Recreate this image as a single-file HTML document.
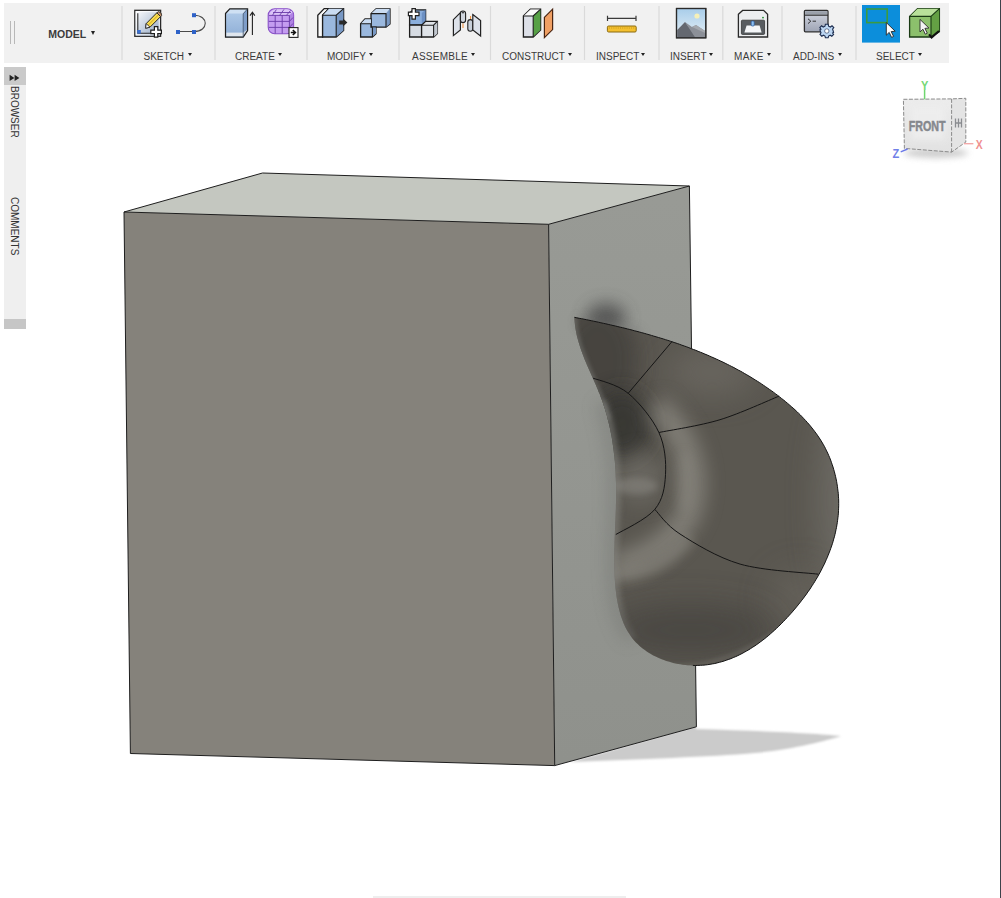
<!DOCTYPE html>
<html><head><meta charset="utf-8">
<style>
html,body{margin:0;padding:0;width:1001px;height:898px;overflow:hidden;background:#fff;font-family:"Liberation Sans",sans-serif;}
svg{position:absolute;left:0;top:0;}
#rline{position:absolute;left:1000px;top:0;width:1px;height:898px;background:#3c424a;}
#tb{position:absolute;left:4px;top:3px;width:945px;height:60px;background:#f1f1f1;}
#tb svg{position:absolute;}
.sep{position:absolute;top:3px;width:1px;height:55px;background:#dcdcdc;}
.lbl{position:absolute;top:48px;font-size:10px;color:#3a3a3a;white-space:nowrap;line-height:12px;}
.arr{display:inline-block;width:0;height:0;border-left:2.9px solid transparent;border-right:2.9px solid transparent;border-top:3.6px solid #222;vertical-align:4.3px;margin-left:3.5px;}
#panel{position:absolute;left:4px;top:67px;width:22px;height:252px;background:#efefef;}
#phead{position:absolute;left:0;top:0;width:22px;height:18px;background:#cacaca;}
#pfoot{position:absolute;left:4px;top:319px;width:22px;height:10px;background:#c6c6c6;}
.vt{position:absolute;font-size:10px;color:#333;transform:rotate(90deg);transform-origin:0 0;white-space:nowrap;line-height:10px;}
#bbar{position:absolute;left:373px;top:896px;width:253px;height:2px;background:#eeeeee;}
</style></head><body>

<svg width="1001" height="898" viewBox="0 0 1001 898">
<defs>
  <filter id="b1" filterUnits="userSpaceOnUse" x="0" y="0" width="1001" height="898"><feGaussianBlur stdDeviation="0.8"/></filter>
  <filter id="b2" filterUnits="userSpaceOnUse" x="0" y="0" width="1001" height="898"><feGaussianBlur stdDeviation="2"/></filter>
  <filter id="b3" filterUnits="userSpaceOnUse" x="0" y="0" width="1001" height="898"><feGaussianBlur stdDeviation="3"/></filter>
  <filter id="b6" filterUnits="userSpaceOnUse" x="0" y="0" width="1001" height="898"><feGaussianBlur stdDeviation="6"/></filter>
  <filter id="b8" filterUnits="userSpaceOnUse" x="0" y="0" width="1001" height="898"><feGaussianBlur stdDeviation="8"/></filter>
  <filter id="b10" filterUnits="userSpaceOnUse" x="0" y="0" width="1001" height="898"><feGaussianBlur stdDeviation="10"/></filter>
  <filter id="b16" filterUnits="userSpaceOnUse" x="0" y="0" width="1001" height="898"><feGaussianBlur stdDeviation="16"/></filter>
  <clipPath id="rface"><polygon points="548.6,224.3 689.4,186 696.4,726.8 554.7,765.6"/></clipPath>
  <clipPath id="bclip"><path d="M574.4,317.3 L576.8,317.8 L579.2,318.3 L581.6,318.7 L584.0,319.2 L586.5,319.7 L588.9,320.2 L591.3,320.7 L593.7,321.2 L596.1,321.7 L598.5,322.2 L600.9,322.8 L603.4,323.3 L605.8,323.8 L608.2,324.4 L610.6,324.9 L613.0,325.5 L615.4,326.0 L617.8,326.6 L620.2,327.2 L622.6,327.7 L625.0,328.3 L627.4,328.9 L629.8,329.5 L632.2,330.1 L634.6,330.8 L637.0,331.4 L639.4,332.0 L641.8,332.7 L644.2,333.3 L646.6,334.0 L649.0,334.7 L651.4,335.4 L653.7,336.1 L656.1,336.8 L658.5,337.5 L660.8,338.2 L663.2,338.9 L665.6,339.7 L667.9,340.4 L670.3,341.2 L672.6,342.0 L674.9,342.7 L677.3,343.5 L679.6,344.3 L681.9,345.2 L684.3,346.0 L686.6,346.8 L688.9,347.7 L691.2,348.6 L693.5,349.5 L695.8,350.3 L698.1,351.3 L700.4,352.2 L702.7,353.1 L704.9,354.1 L707.2,355.0 L709.5,356.0 L711.7,357.0 L714.0,358.0 L716.2,359.0 L718.4,360.0 L720.7,361.1 L722.9,362.1 L725.1,363.2 L727.3,364.3 L729.5,365.4 L731.7,366.5 L733.9,367.6 L736.0,368.8 L738.2,370.0 L740.4,371.1 L742.5,372.3 L744.7,373.6 L746.8,374.8 L748.9,376.0 L751.0,377.3 L753.1,378.6 L755.2,379.9 L757.3,381.2 L759.4,382.5 L761.5,383.9 L763.5,385.3 L765.6,386.7 L767.6,388.1 L769.6,389.5 L771.7,390.9 L773.7,392.4 L775.7,393.9 L777.7,395.4 L779.6,396.9 L781.6,398.5 L783.6,400.0 L785.5,401.6 L787.4,403.2 L789.3,404.8 L791.2,406.5 L793.1,408.1 L795.0,409.8 L796.8,411.5 L798.6,413.3 L800.4,415.0 L802.1,416.8 L803.8,418.6 L805.5,420.4 L807.2,422.3 L808.8,424.1 L810.4,426.0 L812.0,428.0 L813.5,429.9 L815.0,431.9 L816.5,433.9 L817.9,435.9 L819.3,438.0 L820.6,440.0 L821.9,442.1 L823.2,444.3 L824.4,446.4 L825.5,448.6 L826.6,450.9 L827.7,453.1 L828.7,455.4 L829.7,457.7 L830.6,460.0 L831.4,462.3 L832.2,464.6 L833.0,467.0 L833.7,469.4 L834.4,471.8 L835.0,474.2 L835.6,476.6 L836.1,479.0 L836.6,481.4 L837.0,483.9 L837.4,486.3 L837.7,488.8 L838.0,491.2 L838.3,493.6 L838.4,496.1 L838.6,498.5 L838.7,501.0 L838.7,503.4 L838.7,505.8 L838.6,508.2 L838.5,510.7 L838.4,513.1 L838.2,515.5 L837.9,517.9 L837.6,520.3 L837.3,522.6 L836.9,525.0 L836.5,527.4 L836.0,529.7 L835.5,532.1 L835.0,534.4 L834.4,536.8 L833.7,539.1 L833.1,541.4 L832.4,543.7 L831.6,546.0 L830.8,548.3 L830.0,550.6 L829.1,552.9 L828.2,555.1 L827.3,557.4 L826.3,559.6 L825.3,561.9 L824.3,564.1 L823.2,566.3 L822.1,568.5 L821.0,570.7 L819.8,572.9 L818.6,575.0 L817.4,577.2 L816.1,579.3 L814.8,581.5 L813.5,583.6 L812.1,585.7 L810.8,587.8 L809.4,589.9 L807.9,591.9 L806.5,594.0 L805.0,596.0 L803.5,598.1 L801.9,600.1 L800.4,602.1 L798.8,604.1 L797.2,606.1 L795.6,608.0 L793.9,610.0 L792.3,611.9 L790.6,613.8 L788.9,615.7 L787.1,617.6 L785.4,619.5 L783.6,621.3 L781.8,623.2 L780.0,625.0 L778.2,626.7 L776.4,628.5 L774.5,630.2 L772.6,631.9 L770.7,633.6 L768.8,635.3 L766.8,636.9 L764.9,638.5 L762.9,640.0 L760.9,641.5 L758.9,643.0 L756.8,644.5 L754.8,645.9 L752.7,647.2 L750.6,648.6 L748.5,649.9 L746.4,651.1 L744.2,652.3 L742.1,653.5 L739.9,654.6 L737.7,655.7 L735.5,656.7 L733.2,657.6 L731.0,658.6 L728.7,659.4 L726.4,660.2 L724.1,661.0 L721.8,661.7 L719.5,662.3 L717.1,662.9 L714.8,663.5 L712.4,663.9 L710.0,664.3 L707.6,664.7 L705.2,665.0 L702.7,665.2 L700.3,665.3 L697.8,665.4 L695.3,665.5 L692.9,665.4 L690.4,665.3 L687.9,665.2 L685.5,665.0 L683.0,664.7 L680.6,664.3 L678.2,663.9 L675.7,663.4 L673.3,662.9 L671.0,662.3 L668.6,661.6 L666.3,660.9 L664.0,660.1 L661.7,659.2 L659.4,658.3 L657.2,657.3 L655.1,656.3 L652.9,655.2 L650.9,654.0 L648.8,652.8 L646.8,651.5 L644.9,650.1 L643.0,648.7 L641.1,647.2 L639.4,645.7 L637.7,644.1 L636.0,642.4 L634.4,640.7 L632.9,638.9 L631.4,637.0 L630.1,635.1 L628.8,633.1 L627.5,631.1 L626.4,629.0 L625.3,626.9 L624.3,624.7 L623.3,622.4 L622.4,620.1 L621.6,617.8 L620.8,615.4 L620.1,613.0 L619.4,610.6 L618.8,608.1 L618.2,605.7 L617.7,603.1 L617.2,600.6 L616.8,598.1 L616.4,595.5 L616.1,592.9 L615.8,590.4 L615.5,587.8 L615.3,585.2 L615.0,582.6 L614.9,580.0 L614.7,577.5 L614.6,574.9 L614.5,572.4 L614.4,569.8 L614.3,567.3 L614.3,564.8 L614.2,562.2 L614.2,559.7 L614.2,557.2 L614.2,554.7 L614.3,552.2 L614.3,549.7 L614.4,547.3 L614.5,544.8 L614.5,542.3 L614.6,539.8 L614.7,537.4 L614.8,534.9 L614.9,532.4 L615.0,530.0 L615.1,527.5 L615.2,525.1 L615.3,522.6 L615.4,520.2 L615.5,517.7 L615.6,515.3 L615.7,512.8 L615.8,510.4 L615.9,507.9 L615.9,505.5 L616.0,503.0 L616.0,500.5 L616.1,498.1 L616.1,495.6 L616.1,493.2 L616.1,490.7 L616.1,488.2 L616.0,485.8 L616.0,483.3 L615.9,480.8 L615.8,478.4 L615.7,475.9 L615.6,473.4 L615.5,471.0 L615.3,468.5 L615.2,466.0 L615.0,463.6 L614.8,461.1 L614.5,458.7 L614.3,456.2 L614.0,453.7 L613.7,451.3 L613.4,448.9 L613.1,446.4 L612.7,444.0 L612.4,441.5 L612.0,439.1 L611.6,436.7 L611.1,434.3 L610.6,431.8 L610.2,429.4 L609.6,427.0 L609.1,424.6 L608.5,422.2 L607.9,419.9 L607.3,417.5 L606.7,415.1 L606.0,412.7 L605.3,410.4 L604.6,408.0 L603.8,405.7 L603.1,403.4 L602.3,401.1 L601.4,398.7 L600.5,396.4 L599.7,394.1 L598.7,391.9 L597.8,389.6 L596.8,387.3 L595.9,385.0 L594.9,382.8 L593.9,380.5 L592.9,378.3 L591.9,376.0 L590.9,373.7 L589.9,371.5 L588.9,369.2 L587.9,367.0 L586.9,364.7 L586.0,362.4 L585.0,360.2 L584.1,357.9 L583.2,355.6 L582.3,353.3 L581.5,351.0 L580.7,348.7 L579.9,346.3 L579.2,344.0 L578.5,341.7 L577.8,339.3 L577.2,336.9 L576.6,334.5 L576.1,332.1 L575.7,329.7 L575.3,327.3 L575.0,324.8 L574.7,322.3 L574.5,319.8 L574.4,317.3 Z"/></clipPath>
</defs>
<path d="M570,762 C640,759 710,757 755,753 C795,749 825,741 841,736 C815,733 760,731 696,729 L696,726 Z" fill="#cbcbcb" filter="url(#b1)"/>
<polygon points="124,212 262.5,173 689.4,186 548.6,224.3" fill="#c4c7c0"/>
<polygon points="124,212 548.6,224.3 554.7,765.6 130.4,753.5" fill="#85827b"/>
<linearGradient id="rfg" gradientUnits="userSpaceOnUse" x1="0" y1="200" x2="0" y2="760"><stop offset="0" stop-color="#989a95"/><stop offset="1" stop-color="#8f918c"/></linearGradient>
<polygon points="548.6,224.3 689.4,186 696.4,726.8 554.7,765.6" fill="url(#rfg)"/>
<g stroke="#1e1e1e" stroke-width="1" fill="none">
  <polyline points="130.4,753.5 124,212 262.5,173 689.4,186 696.4,726.8 554.7,765.6 130.4,753.5"/>
  <polyline points="124,212 548.6,224.3 689.4,186"/>
  <line x1="548.6" y1="224.3" x2="554.7" y2="765.6"/>
</g>
<g clip-path="url(#rface)">
  <ellipse cx="606" cy="318" rx="20" ry="15" fill="#4a4a49" opacity="0.8" filter="url(#b8)"/>
  <path d="M578,322 L640,335" stroke="#60605e" stroke-width="8" opacity="0.45" filter="url(#b6)"/>
  <path d="M632.9,638.9 L631.4,637.0 L630.1,635.1 L628.8,633.1 L627.5,631.1 L626.4,629.0 L625.3,626.9 L624.3,624.7 L623.3,622.4 L622.4,620.1 L621.6,617.8 L620.8,615.4 L620.1,613.0 L619.4,610.6 L618.8,608.1 L618.2,605.7 L617.7,603.1 L617.2,600.6 L616.8,598.1 L616.4,595.5 L616.1,592.9 L615.8,590.4 L615.5,587.8 L615.3,585.2 L615.0,582.6 L614.9,580.0 L614.7,577.5 L614.6,574.9 L614.5,572.4 L614.4,569.8 L614.3,567.3 L614.3,564.8 L614.2,562.2 L614.2,559.7 L614.2,557.2 L614.2,554.7 L614.3,552.2 L614.3,549.7 L614.4,547.3 L614.5,544.8 L614.5,542.3 L614.6,539.8 L614.7,537.4 L614.8,534.9 L614.9,532.4 L615.0,530.0 L615.1,527.5 L615.2,525.1 L615.3,522.6 L615.4,520.2 L615.5,517.7 L615.6,515.3 L615.7,512.8 L615.8,510.4 L615.9,507.9 L615.9,505.5 L616.0,503.0 L616.0,500.5 L616.1,498.1 L616.1,495.6 L616.1,493.2 L616.1,490.7 L616.1,488.2 L616.0,485.8 L616.0,483.3 L615.9,480.8 L615.8,478.4 L615.7,475.9 L615.6,473.4 L615.5,471.0 L615.3,468.5 L615.2,466.0 L615.0,463.6 L614.8,461.1 L614.5,458.7 L614.3,456.2 L614.0,453.7 L613.7,451.3 L613.4,448.9 L613.1,446.4 L612.7,444.0 L612.4,441.5 L612.0,439.1 L611.6,436.7 L611.1,434.3 L610.6,431.8 L610.2,429.4 L609.6,427.0 L609.1,424.6 L608.5,422.2 L607.9,419.9 L607.3,417.5 L606.7,415.1 L606.0,412.7 L605.3,410.4 L604.6,408.0 L603.8,405.7 L603.1,403.4 L602.3,401.1" stroke="#6e706c" stroke-width="16" fill="none" opacity="0.4" filter="url(#b8)"/>
</g>
<path d="M574.4,317.3 L576.8,317.8 L579.2,318.3 L581.6,318.7 L584.0,319.2 L586.5,319.7 L588.9,320.2 L591.3,320.7 L593.7,321.2 L596.1,321.7 L598.5,322.2 L600.9,322.8 L603.4,323.3 L605.8,323.8 L608.2,324.4 L610.6,324.9 L613.0,325.5 L615.4,326.0 L617.8,326.6 L620.2,327.2 L622.6,327.7 L625.0,328.3 L627.4,328.9 L629.8,329.5 L632.2,330.1 L634.6,330.8 L637.0,331.4 L639.4,332.0 L641.8,332.7 L644.2,333.3 L646.6,334.0 L649.0,334.7 L651.4,335.4 L653.7,336.1 L656.1,336.8 L658.5,337.5 L660.8,338.2 L663.2,338.9 L665.6,339.7 L667.9,340.4 L670.3,341.2 L672.6,342.0 L674.9,342.7 L677.3,343.5 L679.6,344.3 L681.9,345.2 L684.3,346.0 L686.6,346.8 L688.9,347.7 L691.2,348.6 L693.5,349.5 L695.8,350.3 L698.1,351.3 L700.4,352.2 L702.7,353.1 L704.9,354.1 L707.2,355.0 L709.5,356.0 L711.7,357.0 L714.0,358.0 L716.2,359.0 L718.4,360.0 L720.7,361.1 L722.9,362.1 L725.1,363.2 L727.3,364.3 L729.5,365.4 L731.7,366.5 L733.9,367.6 L736.0,368.8 L738.2,370.0 L740.4,371.1 L742.5,372.3 L744.7,373.6 L746.8,374.8 L748.9,376.0 L751.0,377.3 L753.1,378.6 L755.2,379.9 L757.3,381.2 L759.4,382.5 L761.5,383.9 L763.5,385.3 L765.6,386.7 L767.6,388.1 L769.6,389.5 L771.7,390.9 L773.7,392.4 L775.7,393.9 L777.7,395.4 L779.6,396.9 L781.6,398.5 L783.6,400.0 L785.5,401.6 L787.4,403.2 L789.3,404.8 L791.2,406.5 L793.1,408.1 L795.0,409.8 L796.8,411.5 L798.6,413.3 L800.4,415.0 L802.1,416.8 L803.8,418.6 L805.5,420.4 L807.2,422.3 L808.8,424.1 L810.4,426.0 L812.0,428.0 L813.5,429.9 L815.0,431.9 L816.5,433.9 L817.9,435.9 L819.3,438.0 L820.6,440.0 L821.9,442.1 L823.2,444.3 L824.4,446.4 L825.5,448.6 L826.6,450.9 L827.7,453.1 L828.7,455.4 L829.7,457.7 L830.6,460.0 L831.4,462.3 L832.2,464.6 L833.0,467.0 L833.7,469.4 L834.4,471.8 L835.0,474.2 L835.6,476.6 L836.1,479.0 L836.6,481.4 L837.0,483.9 L837.4,486.3 L837.7,488.8 L838.0,491.2 L838.3,493.6 L838.4,496.1 L838.6,498.5 L838.7,501.0 L838.7,503.4 L838.7,505.8 L838.6,508.2 L838.5,510.7 L838.4,513.1 L838.2,515.5 L837.9,517.9 L837.6,520.3 L837.3,522.6 L836.9,525.0 L836.5,527.4 L836.0,529.7 L835.5,532.1 L835.0,534.4 L834.4,536.8 L833.7,539.1 L833.1,541.4 L832.4,543.7 L831.6,546.0 L830.8,548.3 L830.0,550.6 L829.1,552.9 L828.2,555.1 L827.3,557.4 L826.3,559.6 L825.3,561.9 L824.3,564.1 L823.2,566.3 L822.1,568.5 L821.0,570.7 L819.8,572.9 L818.6,575.0 L817.4,577.2 L816.1,579.3 L814.8,581.5 L813.5,583.6 L812.1,585.7 L810.8,587.8 L809.4,589.9 L807.9,591.9 L806.5,594.0 L805.0,596.0 L803.5,598.1 L801.9,600.1 L800.4,602.1 L798.8,604.1 L797.2,606.1 L795.6,608.0 L793.9,610.0 L792.3,611.9 L790.6,613.8 L788.9,615.7 L787.1,617.6 L785.4,619.5 L783.6,621.3 L781.8,623.2 L780.0,625.0 L778.2,626.7 L776.4,628.5 L774.5,630.2 L772.6,631.9 L770.7,633.6 L768.8,635.3 L766.8,636.9 L764.9,638.5 L762.9,640.0 L760.9,641.5 L758.9,643.0 L756.8,644.5 L754.8,645.9 L752.7,647.2 L750.6,648.6 L748.5,649.9 L746.4,651.1 L744.2,652.3 L742.1,653.5 L739.9,654.6 L737.7,655.7 L735.5,656.7 L733.2,657.6 L731.0,658.6 L728.7,659.4 L726.4,660.2 L724.1,661.0 L721.8,661.7 L719.5,662.3 L717.1,662.9 L714.8,663.5 L712.4,663.9 L710.0,664.3 L707.6,664.7 L705.2,665.0 L702.7,665.2 L700.3,665.3 L697.8,665.4 L695.3,665.5 L692.9,665.4 L690.4,665.3 L687.9,665.2 L685.5,665.0 L683.0,664.7 L680.6,664.3 L678.2,663.9 L675.7,663.4 L673.3,662.9 L671.0,662.3 L668.6,661.6 L666.3,660.9 L664.0,660.1 L661.7,659.2 L659.4,658.3 L657.2,657.3 L655.1,656.3 L652.9,655.2 L650.9,654.0 L648.8,652.8 L646.8,651.5 L644.9,650.1 L643.0,648.7 L641.1,647.2 L639.4,645.7 L637.7,644.1 L636.0,642.4 L634.4,640.7 L632.9,638.9 L631.4,637.0 L630.1,635.1 L628.8,633.1 L627.5,631.1 L626.4,629.0 L625.3,626.9 L624.3,624.7 L623.3,622.4 L622.4,620.1 L621.6,617.8 L620.8,615.4 L620.1,613.0 L619.4,610.6 L618.8,608.1 L618.2,605.7 L617.7,603.1 L617.2,600.6 L616.8,598.1 L616.4,595.5 L616.1,592.9 L615.8,590.4 L615.5,587.8 L615.3,585.2 L615.0,582.6 L614.9,580.0 L614.7,577.5 L614.6,574.9 L614.5,572.4 L614.4,569.8 L614.3,567.3 L614.3,564.8 L614.2,562.2 L614.2,559.7 L614.2,557.2 L614.2,554.7 L614.3,552.2 L614.3,549.7 L614.4,547.3 L614.5,544.8 L614.5,542.3 L614.6,539.8 L614.7,537.4 L614.8,534.9 L614.9,532.4 L615.0,530.0 L615.1,527.5 L615.2,525.1 L615.3,522.6 L615.4,520.2 L615.5,517.7 L615.6,515.3 L615.7,512.8 L615.8,510.4 L615.9,507.9 L615.9,505.5 L616.0,503.0 L616.0,500.5 L616.1,498.1 L616.1,495.6 L616.1,493.2 L616.1,490.7 L616.1,488.2 L616.0,485.8 L616.0,483.3 L615.9,480.8 L615.8,478.4 L615.7,475.9 L615.6,473.4 L615.5,471.0 L615.3,468.5 L615.2,466.0 L615.0,463.6 L614.8,461.1 L614.5,458.7 L614.3,456.2 L614.0,453.7 L613.7,451.3 L613.4,448.9 L613.1,446.4 L612.7,444.0 L612.4,441.5 L612.0,439.1 L611.6,436.7 L611.1,434.3 L610.6,431.8 L610.2,429.4 L609.6,427.0 L609.1,424.6 L608.5,422.2 L607.9,419.9 L607.3,417.5 L606.7,415.1 L606.0,412.7 L605.3,410.4 L604.6,408.0 L603.8,405.7 L603.1,403.4 L602.3,401.1 L601.4,398.7 L600.5,396.4 L599.7,394.1 L598.7,391.9 L597.8,389.6 L596.8,387.3 L595.9,385.0 L594.9,382.8 L593.9,380.5 L592.9,378.3 L591.9,376.0 L590.9,373.7 L589.9,371.5 L588.9,369.2 L587.9,367.0 L586.9,364.7 L586.0,362.4 L585.0,360.2 L584.1,357.9 L583.2,355.6 L582.3,353.3 L581.5,351.0 L580.7,348.7 L579.9,346.3 L579.2,344.0 L578.5,341.7 L577.8,339.3 L577.2,336.9 L576.6,334.5 L576.1,332.1 L575.7,329.7 L575.3,327.3 L575.0,324.8 L574.7,322.3 L574.5,319.8 L574.4,317.3 Z" fill="#5a5750"/>
<g clip-path="url(#bclip)">
  <ellipse cx="712" cy="372" rx="45" ry="22" fill="#74716b" opacity="0.6" filter="url(#b16)"/>
  <ellipse cx="598" cy="360" rx="40" ry="55" fill="#3a3935" opacity="0.6" filter="url(#b10)"/>
  <ellipse cx="622" cy="425" rx="30" ry="35" fill="#33322f" opacity="0.8" filter="url(#b10)"/>
  <path d="M655,405 C688,435 702,475 688,515 C672,545 640,562 612,566" stroke="#aaa8a0" stroke-width="22" fill="none" opacity="0.55" filter="url(#b10)"/>
  <ellipse cx="684" cy="482" rx="8" ry="30" fill="#9a9890" opacity="0.3" filter="url(#b6)"/>
  <path d="M612,575 C645,578 672,560 690,538" stroke="#a8a69e" stroke-width="10" fill="none" opacity="0.35" filter="url(#b6)"/>
  <ellipse cx="640" cy="478" rx="22" ry="26" fill="#7a7872" opacity="0.5" filter="url(#b10)"/>
  <ellipse cx="636" cy="486" rx="22" ry="8" fill="#8e8c86" opacity="0.45" filter="url(#b3)"/>
  <path d="M632.9,638.9 L631.4,637.0 L630.1,635.1 L628.8,633.1 L627.5,631.1 L626.4,629.0 L625.3,626.9 L624.3,624.7 L623.3,622.4 L622.4,620.1 L621.6,617.8 L620.8,615.4 L620.1,613.0 L619.4,610.6 L618.8,608.1 L618.2,605.7 L617.7,603.1 L617.2,600.6 L616.8,598.1 L616.4,595.5 L616.1,592.9 L615.8,590.4 L615.5,587.8 L615.3,585.2 L615.0,582.6 L614.9,580.0 L614.7,577.5 L614.6,574.9 L614.5,572.4 L614.4,569.8 L614.3,567.3 L614.3,564.8 L614.2,562.2 L614.2,559.7 L614.2,557.2 L614.2,554.7 L614.3,552.2 L614.3,549.7 L614.4,547.3 L614.5,544.8 L614.5,542.3 L614.6,539.8 L614.7,537.4 L614.8,534.9 L614.9,532.4 L615.0,530.0 L615.1,527.5 L615.2,525.1 L615.3,522.6 L615.4,520.2 L615.5,517.7 L615.6,515.3 L615.7,512.8 L615.8,510.4 L615.9,507.9 L615.9,505.5 L616.0,503.0 L616.0,500.5 L616.1,498.1 L616.1,495.6 L616.1,493.2 L616.1,490.7 L616.1,488.2 L616.0,485.8 L616.0,483.3 L615.9,480.8 L615.8,478.4 L615.7,475.9 L615.6,473.4 L615.5,471.0 L615.3,468.5 L615.2,466.0 L615.0,463.6 L614.8,461.1 L614.5,458.7 L614.3,456.2 L614.0,453.7 L613.7,451.3 L613.4,448.9 L613.1,446.4 L612.7,444.0 L612.4,441.5 L612.0,439.1 L611.6,436.7 L611.1,434.3 L610.6,431.8 L610.2,429.4 L609.6,427.0 L609.1,424.6 L608.5,422.2 L607.9,419.9 L607.3,417.5 L606.7,415.1 L606.0,412.7 L605.3,410.4 L604.6,408.0 L603.8,405.7 L603.1,403.4 L602.3,401.1" stroke="#8e8e89" stroke-width="7" fill="none" opacity="0.6" filter="url(#b3)"/>
  <path d="M607.9,419.9 L607.3,417.5 L606.7,415.1 L606.0,412.7 L605.3,410.4 L604.6,408.0 L603.8,405.7 L603.1,403.4 L602.3,401.1 L601.4,398.7 L600.5,396.4 L599.7,394.1 L598.7,391.9 L597.8,389.6 L596.8,387.3 L595.9,385.0 L594.9,382.8 L593.9,380.5 L592.9,378.3 L591.9,376.0 L590.9,373.7 L589.9,371.5 L588.9,369.2 L587.9,367.0 L586.9,364.7 L586.0,362.4 L585.0,360.2 L584.1,357.9 L583.2,355.6 L582.3,353.3 L581.5,351.0 L580.7,348.7 L579.9,346.3 L579.2,344.0 L578.5,341.7 L577.8,339.3 L577.2,336.9 L576.6,334.5 L576.1,332.1 L575.7,329.7 L575.3,327.3 L575.0,324.8 L574.7,322.3 L574.5,319.8 L574.4,317.3" stroke="#8a8c88" stroke-width="4" fill="none" opacity="0.5" filter="url(#b2)"/>
  <ellipse cx="845" cy="500" rx="26" ry="110" fill="#7a7872" opacity="0.6" filter="url(#b16)"/>
  <ellipse cx="800" cy="600" rx="30" ry="30" fill="#6e6a64" opacity="0.5" filter="url(#b16)"/>
  <ellipse cx="690" cy="630" rx="85" ry="26" fill="#403e3a" opacity="0.6" filter="url(#b16)"/>
  <path d="M650,663 C690,673 740,662 795,618" stroke="#77746e" stroke-width="4" fill="none" opacity="0.5" filter="url(#b2)"/>
</g>
<g stroke="#151515" stroke-width="1" fill="none">
  <path d="M574.4,317.3 L576.8,317.8 L579.2,318.3 L581.6,318.7 L584.0,319.2 L586.5,319.7 L588.9,320.2 L591.3,320.7 L593.7,321.2 L596.1,321.7 L598.5,322.2 L600.9,322.8 L603.4,323.3 L605.8,323.8 L608.2,324.4 L610.6,324.9 L613.0,325.5 L615.4,326.0 L617.8,326.6 L620.2,327.2 L622.6,327.7 L625.0,328.3 L627.4,328.9 L629.8,329.5 L632.2,330.1 L634.6,330.8 L637.0,331.4 L639.4,332.0 L641.8,332.7 L644.2,333.3 L646.6,334.0 L649.0,334.7 L651.4,335.4 L653.7,336.1 L656.1,336.8 L658.5,337.5 L660.8,338.2 L663.2,338.9 L665.6,339.7 L667.9,340.4 L670.3,341.2 L672.6,342.0 L674.9,342.7 L677.3,343.5 L679.6,344.3 L681.9,345.2 L684.3,346.0 L686.6,346.8 L688.9,347.7 L691.2,348.6 L693.5,349.5 L695.8,350.3 L698.1,351.3 L700.4,352.2 L702.7,353.1 L704.9,354.1 L707.2,355.0 L709.5,356.0 L711.7,357.0 L714.0,358.0 L716.2,359.0 L718.4,360.0 L720.7,361.1 L722.9,362.1 L725.1,363.2 L727.3,364.3 L729.5,365.4 L731.7,366.5 L733.9,367.6 L736.0,368.8 L738.2,370.0 L740.4,371.1 L742.5,372.3 L744.7,373.6 L746.8,374.8 L748.9,376.0 L751.0,377.3 L753.1,378.6 L755.2,379.9 L757.3,381.2 L759.4,382.5 L761.5,383.9 L763.5,385.3 L765.6,386.7 L767.6,388.1 L769.6,389.5 L771.7,390.9 L773.7,392.4 L775.7,393.9 L777.7,395.4 L779.6,396.9 L781.6,398.5 L783.6,400.0 L785.5,401.6 L787.4,403.2 L789.3,404.8 L791.2,406.5 L793.1,408.1 L795.0,409.8 L796.8,411.5 L798.6,413.3 L800.4,415.0 L802.1,416.8 L803.8,418.6 L805.5,420.4 L807.2,422.3 L808.8,424.1 L810.4,426.0 L812.0,428.0 L813.5,429.9 L815.0,431.9 L816.5,433.9 L817.9,435.9 L819.3,438.0 L820.6,440.0 L821.9,442.1 L823.2,444.3 L824.4,446.4 L825.5,448.6 L826.6,450.9 L827.7,453.1 L828.7,455.4 L829.7,457.7 L830.6,460.0 L831.4,462.3 L832.2,464.6 L833.0,467.0 L833.7,469.4 L834.4,471.8 L835.0,474.2 L835.6,476.6 L836.1,479.0 L836.6,481.4 L837.0,483.9 L837.4,486.3 L837.7,488.8 L838.0,491.2 L838.3,493.6 L838.4,496.1 L838.6,498.5 L838.7,501.0 L838.7,503.4 L838.7,505.8 L838.6,508.2 L838.5,510.7 L838.4,513.1 L838.2,515.5 L837.9,517.9 L837.6,520.3 L837.3,522.6 L836.9,525.0 L836.5,527.4 L836.0,529.7 L835.5,532.1 L835.0,534.4 L834.4,536.8 L833.7,539.1 L833.1,541.4 L832.4,543.7 L831.6,546.0 L830.8,548.3 L830.0,550.6 L829.1,552.9 L828.2,555.1 L827.3,557.4 L826.3,559.6 L825.3,561.9 L824.3,564.1 L823.2,566.3 L822.1,568.5 L821.0,570.7 L819.8,572.9 L818.6,575.0 L817.4,577.2 L816.1,579.3 L814.8,581.5 L813.5,583.6 L812.1,585.7 L810.8,587.8 L809.4,589.9 L807.9,591.9 L806.5,594.0 L805.0,596.0 L803.5,598.1 L801.9,600.1 L800.4,602.1 L798.8,604.1 L797.2,606.1 L795.6,608.0 L793.9,610.0 L792.3,611.9 L790.6,613.8 L788.9,615.7 L787.1,617.6 L785.4,619.5 L783.6,621.3 L781.8,623.2 L780.0,625.0 L778.2,626.7 L776.4,628.5 L774.5,630.2 L772.6,631.9 L770.7,633.6 L768.8,635.3 L766.8,636.9 L764.9,638.5 L762.9,640.0 L760.9,641.5 L758.9,643.0 L756.8,644.5 L754.8,645.9 L752.7,647.2 L750.6,648.6 L748.5,649.9 L746.4,651.1 L744.2,652.3 L742.1,653.5 L739.9,654.6 L737.7,655.7 L735.5,656.7 L733.2,657.6 L731.0,658.6 L728.7,659.4 L726.4,660.2 L724.1,661.0 L721.8,661.7 L719.5,662.3 L717.1,662.9 L714.8,663.5 L712.4,663.9 L710.0,664.3 L707.6,664.7 L705.2,665.0 L702.7,665.2 L700.3,665.3 L697.8,665.4 L695.3,665.5 L692.9,665.4"/>
  <path d="M593.1,378.2 C598.9,380.3 617.2,384.2 628.2,393.3 C639.2,402.4 652.7,418.9 658.9,432.5 C665.1,446.1 666.2,461.9 665.5,474.7 C664.8,487.5 663.0,499.4 654.8,509.4 C646.6,519.4 622.5,530.6 615.8,534.5"/>
  <path d="M658.9,432.5 C669.1,430.4 700.0,425.8 720.0,419.7 C740.0,413.6 769.3,400.0 779.2,396.1"/>
  <path d="M654.8,509.4 C659.0,513.5 665.8,524.9 680.0,534.0 C694.2,543.1 717.1,557.4 740.1,564.1 C763.1,570.8 805.3,572.5 818.3,574.2"/>
  <path d="M672.2,341.3 L628.2,393.3"/>
</g>
</svg>

<svg width="1001" height="898" viewBox="0 0 1001 898" style="position:absolute;left:0;top:0">
<defs><filter id="vcb" filterUnits="userSpaceOnUse" x="850" y="60" width="150" height="130"><feGaussianBlur stdDeviation="3"/></filter>
<linearGradient id="vcf" x1="0" y1="0" x2="0" y2="1"><stop offset="0" stop-color="#ececec"/><stop offset="1" stop-color="#e2e2e2"/></linearGradient></defs>
<ellipse cx="936" cy="153" rx="32" ry="5" fill="#b8b8b8" opacity="0.7" filter="url(#vcb)"/>
<polygon points="903.4,99.3 951.6,98.9 951.6,152.1 904.4,148.4" fill="url(#vcf)"/>
<polygon points="951.6,98.9 965.8,98.3 965.8,142.1 951.6,152.1" fill="#e4e4e4"/>
<rect x="911" y="107" width="33" height="33" fill="#efefef" filter="url(#vcb)" opacity="0.8"/>
<g stroke="#8a8a8a" stroke-width="1" stroke-dasharray="4,1.5" fill="none">
<polyline points="903.4,99.3 951.6,98.9 965.8,98.3 965.8,142.1 951.6,152.1 904.4,148.4 903.4,99.3"/>
<line x1="951.6" y1="98.9" x2="951.6" y2="152.1"/>
</g>
<text x="927.2" y="130.6" text-anchor="middle" font-family="Liberation Sans" font-weight="bold" font-size="14.5" fill="#85888d" stroke="#85888d" stroke-width="0.5" transform="translate(927.2,0) scale(0.74,1) translate(-927.2,0)">FRONT</text>
<path d="M955.5,118.5 V127.5 M958.5,118.5 V127.5 M961.5,118.5 V127.5 M955.5,123 H961.5" stroke="#8a8c90" stroke-width="1.3"/>
<text x="924.6" y="89.8" text-anchor="middle" font-family="Liberation Sans" font-size="13" font-weight="bold" fill="#76d876" transform="translate(924.6,89.8) scale(0.85,0.95) translate(-924.6,-89.8)">Y</text>
<line x1="924.6" y1="90" x2="924.6" y2="99.3" stroke="#6fd66f" stroke-width="1.5"/>
<text x="979.2" y="149.2" text-anchor="middle" font-family="Liberation Sans" font-size="13" font-weight="bold" fill="#f09090" transform="translate(979.2,149.2) scale(0.8,0.95) translate(-979.2,-149.2)">X</text>
<line x1="964" y1="143.7" x2="973.4" y2="143.7" stroke="#f4a4a4" stroke-width="1.3"/>
<text x="896" y="158" text-anchor="middle" font-family="Liberation Sans" font-size="13" font-weight="bold" fill="#7080e8" transform="translate(896,158) scale(0.85,0.95) translate(-896,-158)">Z</text>
<line x1="900.7" y1="151.8" x2="907.6" y2="149" stroke="#6a78e8" stroke-width="1.4"/>
</svg>
<div id="rline"></div>
<div id="tb">
<svg width="1001" height="70" viewBox="0 0 1001 70" style="position:absolute;left:-4px;top:-3px">
<defs>
 <linearGradient id="gSk" x1="0" y1="0" x2="1" y2="1"><stop offset="0" stop-color="#ffffff"/><stop offset="1" stop-color="#8ea4c2"/></linearGradient>
 <linearGradient id="gBlue" x1="0" y1="0" x2="0" y2="1"><stop offset="0" stop-color="#b4cdea"/><stop offset="1" stop-color="#8eaed6"/></linearGradient>
 <linearGradient id="gGray" x1="0" y1="0" x2="0" y2="1"><stop offset="0" stop-color="#e8ebef"/><stop offset="1" stop-color="#c4cad3"/></linearGradient>
 <linearGradient id="gSky" x1="0" y1="0" x2="0" y2="1"><stop offset="0" stop-color="#a8cdea"/><stop offset="1" stop-color="#e6f0f6"/></linearGradient>
 <linearGradient id="gAdd" x1="0" y1="0" x2="0" y2="1"><stop offset="0" stop-color="#d4d8e2"/><stop offset="1" stop-color="#9ea4b4"/></linearGradient>
</defs>
<!-- grip -->
<line x1="10.5" y1="21" x2="10.5" y2="44" stroke="#b8b8b8" stroke-width="1"/>
<line x1="14.5" y1="21" x2="14.5" y2="44" stroke="#b8b8b8" stroke-width="1"/>
<!-- separators -->
<g stroke="#dadada" stroke-width="1.2">
 <line x1="122" y1="6" x2="122" y2="60"/><line x1="215" y1="6" x2="215" y2="60"/><line x1="307" y1="6" x2="307" y2="60"/>
 <line x1="399" y1="6" x2="399" y2="60"/><line x1="490.5" y1="6" x2="490.5" y2="60"/><line x1="584.5" y1="6" x2="584.5" y2="60"/>
 <line x1="659" y1="6" x2="659" y2="60"/><line x1="722.8" y1="6" x2="722.8" y2="60"/><line x1="782" y1="6" x2="782" y2="60"/>
 <line x1="856" y1="6" x2="856" y2="60"/>
</g>
<!-- SKETCH icon -->
<rect x="134.8" y="10.3" width="25.8" height="26" fill="url(#gSk)" stroke="#2a2a2a" stroke-width="1.3"/>
<rect x="136.2" y="11.7" width="23" height="23.2" fill="none" stroke="#fff" stroke-width="0.9"/>
<path d="M137.8,13.2 V33.3 H151" stroke="#2e2e2e" stroke-width="1.1" fill="none"/>
<rect x="137.2" y="30" width="3.6" height="3.6" fill="#3a6fd0"/>
<path d="M146.2,23.6 L156.8,12.8 L160.6,16.6 L150,27.2 L145.6,28.2 Z" fill="#f6dc50" stroke="#2a2a2a" stroke-width="1"/>
<path d="M148,25.4 L158.6,14.7" stroke="#d8a820" stroke-width="1"/>
<path d="M156.8,12.8 L160.6,16.6 L161.6,15.5 Q162,12.6 158.6,11.6 Z" fill="#c8946a" stroke="#2a2a2a" stroke-width="0.9"/>
<path d="M146.2,23.6 L150,27.2 L145.6,28.2 Z" fill="#fff" stroke="#2a2a2a" stroke-width="0.9"/>
<path d="M154.4,26.6 h3.4 v3.6 h3.6 v3.4 h-3.6 v3.6 h-3.4 v-3.6 h-3.6 v-3.4 h3.6 Z" fill="#fff" stroke="#1e1e1e" stroke-width="1.2"/>
<!-- arc icon -->
<path d="M178,31.5 H194 M194,15.2 C209,15.2 209,31.5 194,31.5" stroke="#4a4a4a" stroke-width="1.1" fill="none"/>
<rect x="176" y="30" width="4" height="4" fill="#2e62c8"/><rect x="192" y="30" width="4" height="4" fill="#2e62c8"/><rect x="192" y="13.2" width="4" height="4" fill="#2e62c8"/>
<!-- EXTRUDE icon -->
<path d="M225.5,13.5 L229.8,8.8 H247.6 V30.6 L243.2,37.2 H225.5 Z" fill="url(#gBlue)"/>
<path d="M225.8,13.5 L229.8,9 H247.4 L243.2,13.5 Z" fill="#cfe0f3"/>
<path d="M243.2,13.5 L247.4,9 V30.6 L243.2,37 Z" fill="#7e9dc8"/>
<rect x="226.2" y="32.6" width="17" height="4" fill="#dfe6ee"/>
<path d="M243.2,32.6 L247.4,29.4 V30.6 L243.2,37 Z" fill="#cfd8e2"/>
<path d="M225.5,13.5 L229.8,8.8 H247.6 V30.6 L243.2,37.2 H225.5 Z" fill="none" stroke="#1e1e1e" stroke-width="1.2"/>
<path d="M243.2,13.8 V37 M247.4,9 L243.2,13.8" stroke="#3a4a60" stroke-width="0.7" fill="none"/>
<path d="M252.4,35 V13 M250,15.6 L252.4,12.2 L254.8,15.6" stroke="#222" stroke-width="1.1" fill="none"/>
<!-- FORM icon -->
<rect x="268.2" y="8.8" width="25.4" height="25" rx="6.5" fill="#c49cf0" stroke="#8850c8" stroke-width="1.1"/>
<path d="M268.8,15.2 Q270.5,9.6 276,9.3 H287 Q292.4,9.8 293.2,14.4 L289.4,15.2 Z" fill="#dcc4f8"/>
<path d="M289.4,15.2 L293.2,11.5 V29 L289.4,33 Z" fill="#b084e4"/>
<g stroke="#6a3aa8" stroke-width="0.9" fill="none">
 <path d="M268.8,15.4 H289.4 M268.8,21.4 H289.4 M268.8,27.4 H289.4 M275.2,15.4 V33.6 M282.2,15.4 V33.6 M289.4,15.4 V31"/>
 <path d="M273,12.5 H291 M276.4,9.6 L272.4,15.4 M284,9.4 L279.6,15.4 M290.6,10.4 L286.4,15.4"/>
 <path d="M289.4,21.4 L293,17.5 M289.4,27.4 L293,23.5"/>
</g>
<rect x="289" y="27.6" width="9" height="9.8" fill="#fff" stroke="#222" stroke-width="1.1"/>
<path d="M290.8,32.5 H294.5 M292.8,30 L295.4,32.5 L292.8,35" stroke="#111" stroke-width="1.6" fill="none"/>
<!-- PRESS PULL -->
<path d="M317.8,15.2 L324.2,8.6 H329 L322.6,15.2 V37 H317.8 Z" fill="#fafafa" stroke="#1e1e1e" stroke-width="1.3"/>
<path d="M322.6,15.2 L329,8.6 H343.6 V30.4 L336.2,37 H322.6 Z" fill="#9ab8de" stroke="#1e1e1e" stroke-width="1.3"/>
<path d="M322.8,15.2 L329,8.8 H343.4 L336.2,15.2 Z" fill="#cadcf2"/>
<path d="M336.2,15.2 L343.4,8.8 V30.4 L336.2,36.8 Z" fill="#7898c4"/>
<path d="M322.6,15.2 H336.2 L343.6,8.6 M336.2,15.2 V37" stroke="#1e1e1e" stroke-width="1.1" fill="none"/>
<path d="M339.2,20.5 H343 V18.5 L347.4,22.6 L343,26.6 V24.6 H339.2 Z" fill="#2a2a2a"/>
<!-- COMBINE -->
<path d="M371,13.6 L376,8.8 H390 V24 L386,27.2 H371 Z" fill="#9ab8de" stroke="#1e1e1e" stroke-width="1.3"/>
<path d="M371.2,13.6 L376,9 H389.8 L386,13.6 Z" fill="#cadcf2"/>
<path d="M386,13.6 L389.8,9 V24 L386,27 Z" fill="#7898c4"/>
<path d="M371,13.6 H386 V27.2" stroke="#1e1e1e" stroke-width="1.1" fill="none"/>
<path d="M360.6,23.8 L365,19 H371 V27.2 H376 V33.6 L372.4,37 H360.6 Z" fill="#9ab8de" stroke="#1e1e1e" stroke-width="1.3"/>
<path d="M360.8,23.8 L365,19.2 H371 V23.8 Z" fill="#cadcf2"/>
<path d="M372.4,27.4 H376 V33.6 L372.4,36.8 Z" fill="#7898c4"/>
<path d="M360.6,23.8 H371 M372.4,27.2 V37" stroke="#1e1e1e" stroke-width="1.1" fill="none"/>
<!-- NEW COMPONENT -->
<path d="M409.6,25 V13 L413,9.8 H425.6 V21.4 L421.8,25 Z" fill="#8aaedc" stroke="#1e1e1e" stroke-width="1.3"/>
<path d="M421.8,13 L425.6,9.8 V21.4 L421.8,25 Z" fill="#6c90c4"/>
<path d="M409.6,25.2 H421.6 V37 H409.6 Z" fill="#d6dbe2" stroke="#1e1e1e" stroke-width="1.3"/>
<path d="M421.6,25.2 L425.6,21.4 H437.4 V33.4 L433.6,37 H421.6 Z" fill="#dfe3e8" stroke="#1e1e1e" stroke-width="1.3"/>
<path d="M433.6,25.2 L437.4,21.4 V33.4 L433.6,37 Z" fill="#c2c8d0"/>
<path d="M421.6,25.2 H433.6 V37 M433.6,25.2 L437.4,21.4" stroke="#1e1e1e" stroke-width="1.1" fill="none"/>
<path d="M412,8.6 h3.4 v3.6 h3.6 v3.4 h-3.6 v3.6 h-3.4 v-3.6 h-3.6 v-3.4 h3.6 Z" fill="#fff" stroke="#222" stroke-width="1.2"/>
<!-- JOINT -->
<path d="M453.4,19.6 L460.4,12.6 V30 L453.4,35.6 Z" fill="#dde2ea" stroke="#222" stroke-width="1.2"/>
<rect x="460.4" y="11" width="5.2" height="11.6" rx="2.6" fill="#d0d6de" stroke="#222" stroke-width="1.1"/>
<circle cx="463" cy="12.6" r="0.9" fill="#222"/>
<path d="M463,23.5 V28 M470.6,16 V19.5" stroke="#f08a30" stroke-width="1" />
<rect x="467.8" y="19.6" width="5" height="11.6" rx="2.5" fill="#c8d0da" stroke="#222" stroke-width="1.1"/>
<path d="M472.8,14.6 L480.6,20.6 V36 L472.8,30 Z" fill="#dde2ea" stroke="#222" stroke-width="1.2"/>
<!-- CONSTRUCT -->
<path d="M523.4,16 L530.4,9.2 H540.6 V30 L533.2,37 H523.4 Z" fill="#dde0e8" stroke="#1e1e1e" stroke-width="1.3"/>
<path d="M523.6,16 L530.4,9.4 H540.4 L533.2,16 Z" fill="#fbfbfb"/>
<path d="M533.2,16 L540.4,9.4 V30 L533.2,36.8 Z" fill="#56a046"/>
<path d="M523.4,16 H533.2 V37 M533.2,16 L540.6,9.2" stroke="#1e1e1e" stroke-width="1.1" fill="none"/>
<path d="M544.4,17.4 L552.6,9.2 V29.6 L544.4,37.6 Z" fill="#f0a064" stroke="#4a2410" stroke-width="1.2"/>
<!-- INSPECT -->
<path d="M607.5,15.8 V21 M607.5,18.4 H636 M636,15.8 V21" stroke="#3a3a3a" stroke-width="1.2" fill="none"/>
<rect x="607.4" y="26" width="28.8" height="6" rx="1.2" fill="#f4c030" stroke="#8a6a10" stroke-width="1"/>
<path d="M609,28 h26" stroke="#c89a18" stroke-width="1" stroke-dasharray="1,1.2"/>
<!-- INSERT -->
<rect x="676.5" y="8.5" width="29.3" height="29.3" fill="url(#gSky)" stroke="#2a2a2a" stroke-width="1.2"/>
<circle cx="697" cy="16" r="2.6" fill="#f6f0b8"/>
<path d="M677.2,37.2 V30 L685,22 L697,37.2 Z" fill="#646870"/>
<path d="M685,22 L692,27 L696,25 L705.2,31 V37.2 H695 Z" fill="#8c9098"/>
<path d="M692,27 L696,25 L705.2,31 V33 Z" fill="#a4a8ae"/>
<rect x="676.5" y="8.5" width="29.3" height="29.3" fill="none" stroke="#2a2a2a" stroke-width="1.2"/>
<!-- MAKE -->
<path d="M738.4,14.2 L742.6,10.4 H763.6 L767.6,14.2 V37 H738.4 Z" fill="#eceef0" stroke="#2a2a2a" stroke-width="1.3"/>
<rect x="741.4" y="20.2" width="23.2" height="14.2" rx="1" fill="#585c60" stroke="#333" stroke-width="0.8"/>
<path d="M744.4,32.6 L746.6,25.6 H759.6 L761.6,32.6 Z" fill="#f4f6f8"/>
<rect x="751.2" y="21" width="3" height="5" rx="1" fill="#8cc0f0" stroke="#2a5aa0" stroke-width="0.7"/>
<circle cx="763" cy="17.6" r="0.9" fill="#1a8a2a"/>
<!-- ADD-INS -->
<rect x="804.4" y="10.4" width="23.6" height="21.4" rx="1" fill="url(#gAdd)" stroke="#2e2e2e" stroke-width="1.3"/>
<rect x="805.2" y="11.2" width="22" height="3.4" fill="#9aa0aa"/>
<path d="M804.4,15.2 H828" stroke="#2e2e2e" stroke-width="1.1"/>
<path d="M808,18.8 L810.8,21.2 L808,23.6 M812.6,21.2 H816" stroke="#222" stroke-width="0.9" fill="none"/>
<g transform="translate(826.8,31)">
 <path d="M-1.4,-6.8 H1.4 L1.8,-4.8 L3.6,-4 L5.2,-5.2 L7,-3.4 L5.8,-1.8 L6.4,0 L6.8,1.4 V1.4 L5.8,2 L6.8,3.4 L5,5.2 L3.4,4.2 L1.8,5 L1.4,6.8 H-1.4 L-1.8,5 L-3.4,4.2 L-5,5.2 L-6.8,3.4 L-5.8,1.8 L-6.6,0 L-6.8,-1.4 L-5.8,-1.8 L-7,-3.4 L-5.2,-5.2 L-3.6,-4 L-1.8,-4.8 Z" fill="#bcd6f2" stroke="#1e2e50" stroke-width="1.1"/>
 <circle r="2.2" fill="#fff" stroke="#1e2e50" stroke-width="0.6"/>
</g>
<!-- SELECT -->
<rect x="862" y="5" width="38" height="37.6" fill="#0c8edb"/>
<rect x="866.8" y="9" width="20.4" height="13.6" fill="none" stroke="#3c9a40" stroke-width="1.6"/>
<path d="M886.3,22.6 V35.2 L889.2,32.4 L891.6,37.4 L893.6,36.4 L891.2,31.6 L895.2,31.2 Z" fill="#fff" stroke="#222" stroke-width="0.9"/>
<path d="M909.6,16.4 L917.6,8.6 H939.4 V31.6 L931,37 H909.6 Z" fill="#8cc06c" stroke="#1a3a14" stroke-width="1.3"/>
<path d="M909.8,16.4 L917.6,8.8 H939.2 L931,16.4 Z" fill="#b8e09a"/>
<path d="M931,16.4 L939.2,8.8 V31.6 L931,36.8 Z" fill="#64a044"/>
<path d="M909.6,16.4 H931 V37 M931,16.4 L939.4,8.6" stroke="#1a3a14" stroke-width="1.1" fill="none"/>
<path d="M920,19.4 V32 L922.9,29.2 L925.3,34.2 L927.3,33.2 L924.9,28.4 L928.9,28 Z" fill="#f4f4f4" stroke="#2a2a2a" stroke-width="0.9"/>
<path d="M929,34.4 L931.6,37.4 L939,31" stroke="#111" stroke-width="2.2" fill="none"/>
</svg>
<div class="lbl" style="left:44.3px;top:24.8px;font-weight:bold;font-size:10.5px;color:#3c3c3c">MODEL<span class="arr" style="margin-left:5px;border-left-width:2.8px;border-right-width:2.8px;border-top-width:4px;vertical-align:2.5px"></span></div>
<div class="lbl" style="left:139.5px">SKETCH<span class="arr"></span></div>
<div class="lbl" style="left:231px">CREATE<span class="arr"></span></div>
<div class="lbl" style="left:323px">MODIFY<span class="arr"></span></div>
<div class="lbl" style="left:408px;letter-spacing:0.25px">ASSEMBLE<span class="arr"></span></div>
<div class="lbl" style="left:498px">CONSTRUCT<span class="arr"></span></div>
<div class="lbl" style="left:592px">INSPECT<span class="arr" style="margin-left:2px"></span></div>
<div class="lbl" style="left:666px">INSERT<span class="arr" style="margin-left:2.5px"></span></div>
<div class="lbl" style="left:730px;letter-spacing:0.4px">MAKE<span class="arr" style="margin-left:3.5px"></span></div>
<div class="lbl" style="left:789px">ADD-INS<span class="arr"></span></div>
<div class="lbl" style="left:872px">SELECT<span class="arr"></span></div>

</div>
<div id="panel"><div id="phead"><svg width="22" height="18" style="position:absolute;left:0;top:0"><path d="M5.6,7.8 L10.4,10.9 L5.6,14 Z M10.6,7.8 L15.4,10.9 L10.6,14 Z" fill="#222"/></svg></div>
<div class="vt" style="left:14.8px;top:18.5px">BROWSER</div>
<div class="vt" style="left:14.8px;top:129.5px">COMMENTS</div>
</div>
<div id="pfoot"></div>
<div id="bbar"></div>
</body></html>
